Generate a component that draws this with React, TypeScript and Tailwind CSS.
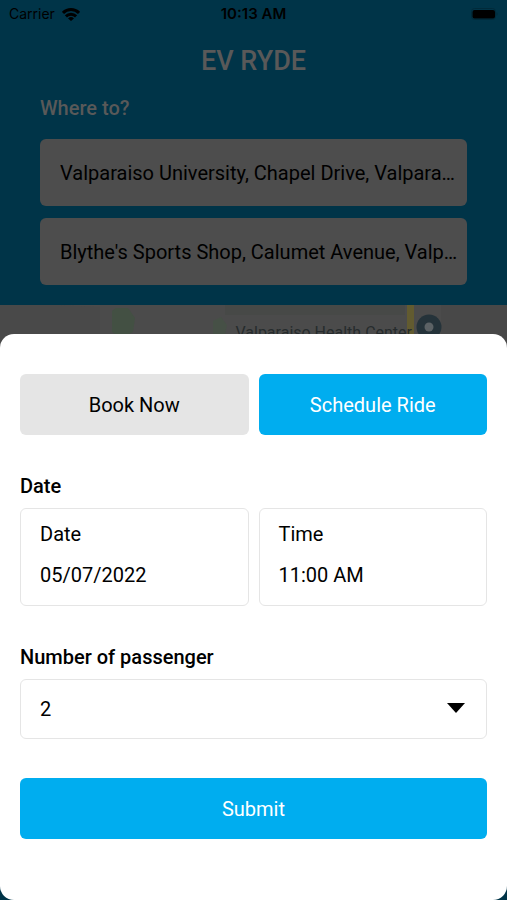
import { useState } from "react";
import type { ReactNode } from "react";

type RideMode = "now" | "schedule";

type AddressFieldProps = {
  label: string;
  value: string;
  onChange: (value: string) => void;
};

type PickerFieldProps = {
  id: string;
  label: string;
  value: string;
  onChange: (value: string) => void;
};

type ModeButtonProps = {
  active: boolean;
  onClick: () => void;
  children: ReactNode;
};

const PASSENGER_OPTIONS = ["1", "2", "3", "4"];

/**
 * Phone status bar: carrier, clock and battery.
 */
function StatusBar() {
  return (
    <div className="grid h-7 grid-cols-3 items-center px-[9px] font-[Inter,sans-serif] text-sm text-black">
      <div className="flex items-center gap-[7px]">
        <span>Carrier</span>
        <svg viewBox="0 0 18 13" className="h-[13px] w-[18px]" aria-hidden="true">
          <g fill="none" stroke="currentColor" strokeWidth="3">
            <path d="M1 4.9a11.4 11.4 0 0 1 16 0" />
            <path d="M3.9 8.4a7.2 7.2 0 0 1 10.2 0" />
          </g>
          <path d="M9 13 6 10.4a4.3 4.3 0 0 1 6 0z" fill="currentColor" />
        </svg>
      </div>
      <span className="text-center text-[15px] font-semibold">10:13 AM</span>
      <svg
        viewBox="0 0 27 12"
        className="h-3 w-[27px] justify-self-end"
        aria-hidden="true"
      >
        <rect
          x="0.5"
          y="0.5"
          width="24"
          height="11"
          rx="3"
          fill="none"
          stroke="#002a3a"
        />
        <rect x="1.5" y="2" width="22.5" height="8.5" rx="2" fill="black" />
        <path d="M25.5 4.2a2 2 0 0 1 0 3.6z" fill="#002a3a" />
      </svg>
    </div>
  );
}

/**
 * Single line address box in the dimmed header.
 */
function AddressField({ label, value, onChange }: AddressFieldProps) {
  return (
    <input
      type="text"
      aria-label={label}
      value={value}
      onChange={(event) => onChange(event.target.value)}
      className="h-[67px] w-full rounded-md bg-[#4d4d4d] pr-1 pl-5 text-xl text-ellipsis text-black outline-none"
    />
  );
}

/**
 * Strip of map that shows above the sheet.
 */
function MapStrip() {
  return (
    <div className="relative h-12 shrink-0 overflow-hidden bg-[#4b4b4b]">
      <svg
        viewBox="0 0 507 48"
        preserveAspectRatio="xMaxYMin slice"
        className="h-full w-full"
        aria-hidden="true"
      >
        <path d="M0 0h60l40 2v46H0z" fill="#494949" />
        <path d="M112 6l4-3h12l7 10-2 14-12 6-9-6z" fill="#435043" />
        <path d="M213 16l8-4 6 8-3 14h-11z" fill="#465046" />
        <path d="M225 0h180v10H225z" fill="#474947" />
        <path d="M407 0h7v48h-7z" fill="#625b30" />
        <path d="M441 0h66v48h-66z" fill="#484848" />
      </svg>
      <div className="absolute top-[9px] right-[65px] flex items-start gap-1">
        <span className="pt-[7px] text-base whitespace-nowrap text-[#262b2d]">
          Valparaiso Health Center
        </span>
        <svg viewBox="0 0 26 26" className="h-[26px] w-[26px]" aria-hidden="true">
          <circle cx="13" cy="13" r="12.5" fill="#25333a" />
          <circle cx="13" cy="13" r="4.5" fill="#5c6265" />
        </svg>
      </div>
    </div>
  );
}

/**
 * Toggle between an immediate and a scheduled ride.
 */
function ModeButton({ active, onClick, children }: ModeButtonProps) {
  return (
    <button
      type="button"
      aria-pressed={active}
      onClick={onClick}
      className={`h-[61px] rounded-md text-xl ${
        active ? "bg-[#00adef] text-white" : "bg-[#e5e5e5] text-black"
      }`}
    >
      {children}
    </button>
  );
}

/**
 * Bordered box with a caption over its value.
 */
function PickerField({ id, label, value, onChange }: PickerFieldProps) {
  return (
    <div className="flex h-[98px] flex-col gap-[17px] rounded-md border border-[#e5e5e5] px-[19px] pt-[13px] text-xl leading-6">
      <label htmlFor={id}>{label}</label>
      <input
        id={id}
        type="text"
        value={value}
        onChange={(event) => onChange(event.target.value)}
        className="h-6 w-full outline-none"
      />
    </div>
  );
}

export default function App() {
  const [pickup, setPickup] = useState(
    "Valparaiso University, Chapel Drive, Valpara…",
  );
  const [dropoff, setDropoff] = useState(
    "Blythe's Sports Shop, Calumet Avenue, Valp…",
  );
  const [mode, setMode] = useState<RideMode>("schedule");
  const [date, setDate] = useState("05/07/2022");
  const [time, setTime] = useState("11:00 AM");
  const [passengers, setPassengers] = useState("2");

  return (
    <main className="flex min-h-screen flex-col bg-[#003448] font-[Roboto,sans-serif] text-black">
      <StatusBar />

      <header className="px-10 pt-[17px] pb-5 text-[#595959]">
        <h1 className="text-center text-[27px] leading-8 font-medium">
          EV RYDE
        </h1>
        <h2 className="mt-[19px] text-xl leading-6 font-medium">Where to?</h2>
        <div className="mt-[19px] flex flex-col gap-3">
          <AddressField label="Pickup" value={pickup} onChange={setPickup} />
          <AddressField label="Drop-off" value={dropoff} onChange={setDropoff} />
        </div>
      </header>

      <MapStrip />

      <form
        onSubmit={(event) => event.preventDefault()}
        className="relative -mt-[19px] flex grow flex-col gap-[39px] rounded-[14px] bg-white px-5 pt-10 pb-10"
      >
        <div className="grid grid-cols-2 gap-2.5">
          <ModeButton active={mode === "now"} onClick={() => setMode("now")}>
            Book Now
          </ModeButton>
          <ModeButton
            active={mode === "schedule"}
            onClick={() => setMode("schedule")}
          >
            Schedule Ride
          </ModeButton>
        </div>

        <section className="flex flex-col gap-2.5">
          <h3 className="text-xl leading-6 font-medium">Date</h3>
          <div className="grid grid-cols-2 gap-2.5">
            <PickerField id="date" label="Date" value={date} onChange={setDate} />
            <PickerField id="time" label="Time" value={time} onChange={setTime} />
          </div>
        </section>

        <div className="flex flex-col gap-2.5">
          <label htmlFor="passengers" className="text-xl leading-6 font-medium">
            Number of passenger
          </label>
          <div className="relative">
            <select
              id="passengers"
              value={passengers}
              onChange={(event) => setPassengers(event.target.value)}
              className="block h-[60px] w-full appearance-none rounded-md border border-[#e5e5e5] bg-white px-[19px] text-xl outline-none"
            >
              {PASSENGER_OPTIONS.map((option) => (
                <option key={option} value={option}>
                  {option}
                </option>
              ))}
            </select>
            <svg
              viewBox="0 0 18 10"
              className="pointer-events-none absolute top-6 right-[22px] h-[10px] w-[18px]"
              aria-hidden="true"
            >
              <path d="M0 0h18L9 10z" fill="black" />
            </svg>
          </div>
        </div>

        <button
          type="submit"
          className="h-[61px] rounded-md bg-[#00adef] text-xl text-white"
        >
          Submit
        </button>
      </form>
    </main>
  );
}
